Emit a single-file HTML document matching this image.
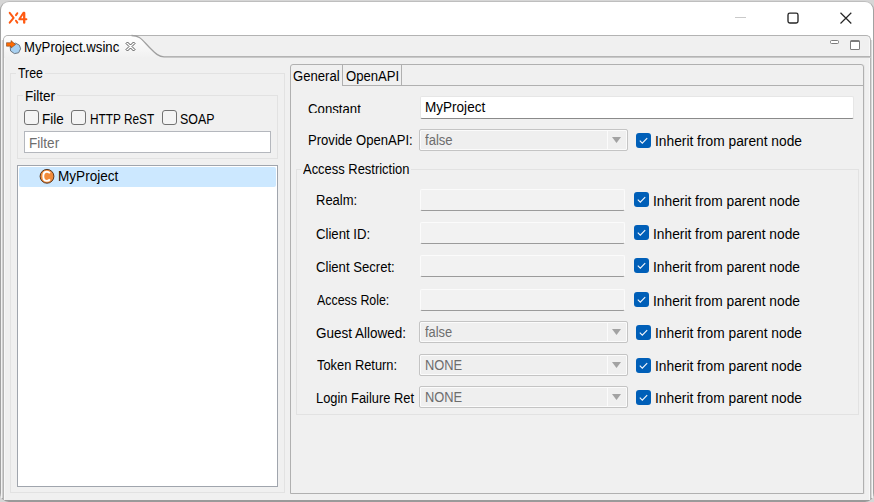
<!DOCTYPE html>
<html><head><meta charset="utf-8"><style>
html,body{margin:0;padding:0}
body{width:874px;height:502px;position:relative;overflow:hidden;background:#d6d6d6;font-family:"Liberation Sans",sans-serif}
.t{position:absolute;font-size:14px;line-height:16px;white-space:nowrap;transform-origin:0 0}
.a{position:absolute;box-sizing:border-box}
.cbe{position:absolute;width:15px;height:15px;box-sizing:border-box;border:1px solid #727272;border-radius:3px;background:#f4f4f4}
.cbc{position:absolute}
.dfield{position:absolute;width:205px;height:22px;box-sizing:border-box;border:1px solid #fbfbfb;border-bottom:1px solid #9b9b9b;border-radius:2px;background:#f2f2f2}
.combo{position:absolute;width:209px;height:22px;box-sizing:border-box;border:1px solid #c4c4c4;border-radius:2px;background:#efefef;box-shadow:inset 0 0 0 1px #fbfbfb}
.combo .sep{position:absolute;left:187px;top:1px;width:1px;height:18px;background:#fbfbfb}
.combo .arr{position:absolute;left:192px;top:7px}
</style></head><body>
<div class="a" style="left:0;top:1px;width:874px;height:501px;border:1px solid #a2a2a2;border-top-color:#bebebe;border-bottom:2px solid #9a9a9a;border-radius:9px;background:#fff"></div>
<div class="a" style="left:1px;top:40px;width:1px;height:458px;background:#f2f2f2"></div>
<div class="a" style="left:2px;top:40px;width:1px;height:458px;background:#cfcfcf"></div>
<div class="a" style="left:871px;top:40px;width:1px;height:458px;background:#d8d8d8"></div>
<div class="a" style="left:872px;top:40px;width:1px;height:458px;background:#f5f5f5"></div>
<!-- logo -->
<svg class="a" style="left:0;top:0" width="40" height="34" viewBox="0 0 40 34">
<g fill="none" stroke="#ff5a12" stroke-width="2" stroke-linecap="round" stroke-linejoin="round">
<path d="M9.7 12.9 L13.6 17.9 L9.7 22.7"/>
<path d="M17.3 13.2 L16 15.1"/><path d="M16 20.7 L17.3 22.6"/>
<path d="M23.5 12.8 L19.3 19.3 H26.4"/>
<path d="M24.2 12.9 V22.7" stroke-width="2.3"/>
</g></svg>
<!-- title buttons -->
<div class="a" style="left:735px;top:17px;width:11px;height:1px;background:#c9c9c9"></div>
<svg class="a" style="left:780px;top:5px" width="26" height="26" viewBox="780 5 26 26"><rect x="788" y="13.1" width="10" height="9.9" rx="1.8" fill="none" stroke="#262626" stroke-width="1.35"/></svg>
<svg class="a" style="left:839px;top:11px" width="14" height="14" viewBox="0 0 14 14"><path d="M1.5 1.8 L12.3 12.5 M12.3 1.8 L1.5 12.5" stroke="#262626" stroke-width="1.2"/></svg>
<!-- editor frame -->
<div class="a" style="left:3px;top:35px;width:868px;height:465px;border:1px solid #b3b3b3;border-bottom:none;border-radius:5px 5px 0 0;background:#f0f0f0;box-shadow:inset 1px 0 #f8f8f8,inset -1px 0 #f8f8f8"></div>
<svg class="a" style="left:0;top:0" width="874" height="60" viewBox="0 0 874 60">
<defs><linearGradient id="tg" x1="0" y1="0" x2="0" y2="1"><stop offset="0" stop-color="#ffffff"/><stop offset="1" stop-color="#f0f0f0"/></linearGradient></defs>
<path d="M4 58 V40.5 Q4 36 8.5 36 H131.5 C140 36 142 40 150 48 C156 54 159 56.5 164 56.5 H870.5 V58 Z" fill="url(#tg)"/>
<path d="M131.5 35.5 C140 35.5 142 40 150 48 C156 54 159 56.8 164 56.8 H870.5" fill="none" stroke="#a0a0a0" stroke-width="1.3"/>
</svg>
<!-- tab icon -->
<svg class="a" style="left:0;top:30px" width="24" height="26" viewBox="0 30 24 26">
<path d="M12.5 43.8 L15.6 43.2 L19.4 45.2 L20.6 48.8 L18.6 52.8 L14.4 53.6 L10.6 51 L10.2 47 Z" fill="#a9d1f1" stroke="#5f6a75" stroke-width="0.9"/>
<path d="M6.5 42.7 H11 V40.6 L15.6 44.5 L11 48 V46.2 H6.5 Z" fill="#ff6a00" stroke="#7a4a2a" stroke-width="0.6"/>
</svg>
<!-- tab close -->
<svg class="a" style="left:124px;top:40px" width="13" height="13" viewBox="0 0 13 13">
<path d="M2 3.5 L3.5 2 L6.5 5 L9.5 2 L11 3.5 L8 6.5 L11 9.5 L9.5 11 L6.5 8 L3.5 11 L2 9.5 L5 6.5 Z" fill="#fff" stroke="#555" stroke-width="1"/>
</svg>
<!-- view min/max -->
<div class="a" style="left:830px;top:40px;width:9px;height:4px;border:1px solid #7b7b7b;border-radius:1.5px;background:#fff"></div>
<div class="a" style="left:850px;top:40px;width:10px;height:10px;border:1px solid #7b7b7b;border-top-width:2px;border-radius:1.5px;background:#fff"></div>
<!-- tree group -->
<div class="a" style="left:10px;top:73px;width:275px;height:420px;border:1px solid #e2e2e2"></div>
<div class="a" style="left:16px;top:66px;width:29px;height:14px;background:#f0f0f0"></div>
<div class="a" style="left:17px;top:95px;width:261px;height:64px;border:1px solid #e2e2e2"></div>
<div class="a" style="left:23px;top:90px;width:34px;height:12px;background:#f0f0f0"></div>
<div class="a" style="left:24px;top:131px;width:247px;height:22px;border:1px solid #b4b7bd;background:#fff"></div>
<div class="a" style="left:17px;top:165px;width:261px;height:322px;border:1px solid #a0a5ad;background:#fff"></div>
<div class="a" style="left:19px;top:167px;width:257px;height:20px;border-radius:2px;background:#cce8ff"></div>
<svg class="a" style="left:38px;top:168px" width="18" height="17" viewBox="0 0 18 17">
<circle cx="9" cy="8.3" r="6.9" fill="#f18b3b" stroke="#573720" stroke-width="1"/>
<path d="M11.9 5.3 C11 4.1 9.9 3.8 8.9 3.8 C6.5 3.8 5.3 5.9 5.3 8.3 C5.3 10.8 6.6 12.9 8.9 12.9 C10.1 12.9 11.1 12.4 11.9 11.4" fill="none" stroke="#fff" stroke-width="1.9"/>
</svg>
<div class="cbe" style="left:24px;top:110px"></div><div class="cbe" style="left:71px;top:110px"></div><div class="cbe" style="left:162px;top:110px"></div>
<!-- tab folder -->
<div class="a" style="left:290px;top:64px;width:574px;height:430px;border:1px solid #b0b0b0;border-radius:3px 3px 0 0;background:#f0f0f0;box-shadow:1px 0 #e6e6e6"></div>
<div class="a" style="left:342px;top:85px;width:521px;height:1px;background:#b0b0b0"></div>
<div class="a" style="left:342px;top:64px;width:1px;height:22px;background:#b0b0b0"></div>
<div class="a" style="left:401px;top:64px;width:1px;height:22px;background:#b0b0b0"></div>
<!-- constant field -->
<div class="a" style="left:420px;top:96px;width:434px;height:23px;border:1px solid #e6e6e6;border-bottom:1px solid #8a8a8a;border-radius:2px;background:#fff"></div>
<div class="combo" style="left:419px;top:129px"><div class="sep"></div><svg class="arr" width="9" height="6" viewBox="0 0 9 6"><path d="M0 0H9L4.5 6Z" fill="#a2a2a2"/></svg></div>
<svg class="cbc" style="left:636px;top:133px" width="15" height="15" viewBox="0 0 15 15"><rect x="0" y="0" width="15" height="15" rx="3" fill="#005fb8"/><path d="M3.8 7.6 L6.3 10.1 L11.2 5.1" fill="none" stroke="#f4f7fc" stroke-width="1.15"/></svg>
<!-- access restriction group -->
<div class="a" style="left:296px;top:169px;width:563px;height:246px;border:1px solid #e2e2e2"></div>
<div class="a" style="left:301px;top:162px;width:110px;height:14px;background:#f0f0f0"></div>
<div class="dfield" style="left:420px;top:189px"></div><svg class="cbc" style="left:634px;top:192px" width="15" height="15" viewBox="0 0 15 15"><rect x="0" y="0" width="15" height="15" rx="3" fill="#005fb8"/><path d="M3.8 7.6 L6.3 10.1 L11.2 5.1" fill="none" stroke="#f4f7fc" stroke-width="1.15"/></svg><div class="t" style="left:653.42px;top:192.50px;color:#000;transform:scaleX(0.9838)">Inherit from parent node</div><div class="dfield" style="left:420px;top:222px"></div><svg class="cbc" style="left:634px;top:225px" width="15" height="15" viewBox="0 0 15 15"><rect x="0" y="0" width="15" height="15" rx="3" fill="#005fb8"/><path d="M3.8 7.6 L6.3 10.1 L11.2 5.1" fill="none" stroke="#f4f7fc" stroke-width="1.15"/></svg><div class="t" style="left:653.42px;top:225.50px;color:#000;transform:scaleX(0.9838)">Inherit from parent node</div><div class="dfield" style="left:420px;top:255px"></div><svg class="cbc" style="left:634px;top:258px" width="15" height="15" viewBox="0 0 15 15"><rect x="0" y="0" width="15" height="15" rx="3" fill="#005fb8"/><path d="M3.8 7.6 L6.3 10.1 L11.2 5.1" fill="none" stroke="#f4f7fc" stroke-width="1.15"/></svg><div class="t" style="left:653.42px;top:258.50px;color:#000;transform:scaleX(0.9838)">Inherit from parent node</div><div class="dfield" style="left:420px;top:289px"></div><svg class="cbc" style="left:634px;top:292px" width="15" height="15" viewBox="0 0 15 15"><rect x="0" y="0" width="15" height="15" rx="3" fill="#005fb8"/><path d="M3.8 7.6 L6.3 10.1 L11.2 5.1" fill="none" stroke="#f4f7fc" stroke-width="1.15"/></svg><div class="t" style="left:653.42px;top:292.50px;color:#000;transform:scaleX(0.9838)">Inherit from parent node</div><div class="combo" style="left:419px;top:321px"><div class="sep"></div><svg class="arr" width="9" height="6" viewBox="0 0 9 6"><path d="M0 0H9L4.5 6Z" fill="#a2a2a2"/></svg></div><div class="t" style="left:425.30px;top:324.00px;color:#6d6d6d;transform:scaleX(0.9200)">false</div><svg class="cbc" style="left:636px;top:325px" width="15" height="15" viewBox="0 0 15 15"><rect x="0" y="0" width="15" height="15" rx="3" fill="#005fb8"/><path d="M3.8 7.6 L6.3 10.1 L11.2 5.1" fill="none" stroke="#f4f7fc" stroke-width="1.15"/></svg><div class="t" style="left:655.12px;top:325.00px;color:#000;transform:scaleX(0.9838)">Inherit from parent node</div><div class="combo" style="left:419px;top:354px"><div class="sep"></div><svg class="arr" width="9" height="6" viewBox="0 0 9 6"><path d="M0 0H9L4.5 6Z" fill="#a2a2a2"/></svg></div><div class="t" style="left:425.08px;top:357.00px;color:#6d6d6d;transform:scaleX(0.9200)">NONE</div><svg class="cbc" style="left:636px;top:358px" width="15" height="15" viewBox="0 0 15 15"><rect x="0" y="0" width="15" height="15" rx="3" fill="#005fb8"/><path d="M3.8 7.6 L6.3 10.1 L11.2 5.1" fill="none" stroke="#f4f7fc" stroke-width="1.15"/></svg><div class="t" style="left:655.12px;top:358.00px;color:#000;transform:scaleX(0.9838)">Inherit from parent node</div><div class="combo" style="left:419px;top:386px"><div class="sep"></div><svg class="arr" width="9" height="6" viewBox="0 0 9 6"><path d="M0 0H9L4.5 6Z" fill="#a2a2a2"/></svg></div><div class="t" style="left:425.08px;top:389.00px;color:#6d6d6d;transform:scaleX(0.9200)">NONE</div><svg class="cbc" style="left:636px;top:390px" width="15" height="15" viewBox="0 0 15 15"><rect x="0" y="0" width="15" height="15" rx="3" fill="#005fb8"/><path d="M3.8 7.6 L6.3 10.1 L11.2 5.1" fill="none" stroke="#f4f7fc" stroke-width="1.15"/></svg><div class="t" style="left:655.12px;top:390.00px;color:#000;transform:scaleX(0.9838)">Inherit from parent node</div>
<div class="t" style="left:24.06px;top:39.00px;color:#000;transform:scaleX(0.9420)">MyProject.wsinc</div>
<div class="t" style="left:18.30px;top:65.30px;color:#000;transform:scaleX(0.8821)">Tree</div>
<div class="t" style="left:25.03px;top:88.00px;color:#000;transform:scaleX(0.9667)">Filter</div>
<div class="t" style="left:42.04px;top:110.60px;color:#000;transform:scaleX(0.9619)">File</div>
<div class="t" style="left:89.55px;top:110.60px;color:#000;transform:scaleX(0.8453)">HTTP ReST</div>
<div class="t" style="left:179.71px;top:110.60px;color:#000;transform:scaleX(0.8865)">SOAP</div>
<div class="t" style="left:29.13px;top:134.70px;color:#6d6d6d;transform:scaleX(0.9700)">Filter</div>
<div class="t" style="left:57.73px;top:167.70px;color:#000;transform:scaleX(0.9689)">MyProject</div>
<div class="t" style="left:292.66px;top:68.00px;color:#000;transform:scaleX(0.9354)">General</div>
<div class="t" style="left:345.66px;top:68.00px;color:#000;transform:scaleX(0.9364)">OpenAPI</div>
<div class="t" style="left:307.76px;top:101.00px;color:#000;transform:scaleX(0.9436);height:12.2px;overflow:hidden">Constant</div>
<div class="t" style="left:425.03px;top:99.40px;color:#000;transform:scaleX(0.9672)">MyProject</div>
<div class="t" style="left:308.27px;top:132.00px;color:#000;transform:scaleX(0.9345)">Provide OpenAPI:</div>
<div class="t" style="left:425.30px;top:132.00px;color:#6d6d6d;transform:scaleX(0.9345)">false</div>
<div class="t" style="left:654.72px;top:133.00px;color:#000;transform:scaleX(0.9838)">Inherit from parent node</div>
<div class="t" style="left:303.20px;top:161.30px;color:#000;transform:scaleX(0.9246)">Access Restriction</div>
<div class="t" style="left:316.07px;top:192.00px;color:#000;transform:scaleX(0.9286)">Realm:</div>
<div class="t" style="left:316.06px;top:225.50px;color:#000;transform:scaleX(0.9411)">Client ID:</div>
<div class="t" style="left:316.06px;top:258.80px;color:#000;transform:scaleX(0.9366)">Client Secret:</div>
<div class="t" style="left:317.00px;top:291.70px;color:#000;transform:scaleX(0.8852)">Access Role:</div>
<div class="t" style="left:316.04px;top:325.00px;color:#000;transform:scaleX(0.9637)">Guest Allowed:</div>
<div class="t" style="left:317.00px;top:357.30px;color:#000;transform:scaleX(0.9186)">Token Return:</div>
<div class="t" style="left:316.08px;top:389.50px;color:#000;transform:scaleX(0.9189)">Login Failure Ret</div>
</body></html>
